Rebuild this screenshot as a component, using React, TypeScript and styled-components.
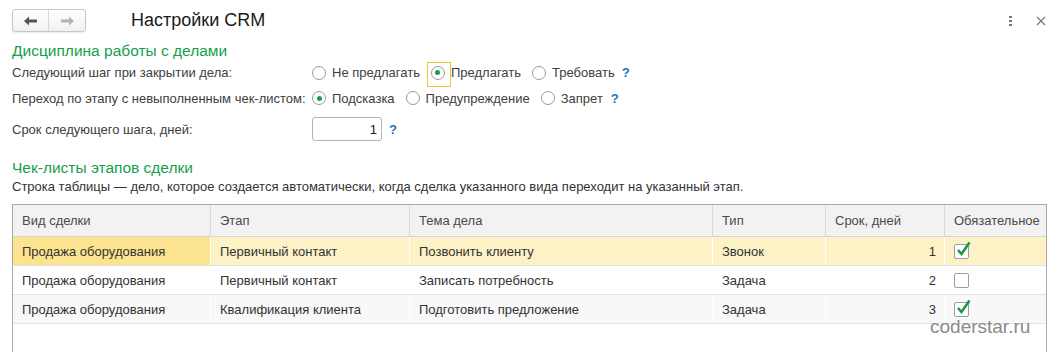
import React from "react";
import styled, { createGlobalStyle, css } from "styled-components";

const Global = createGlobalStyle`
  html, body { margin: 0; padding: 0; background: #fff; }
  body { font-family: "Liberation Sans", Arial, sans-serif; color: #404040; }
  * { box-sizing: border-box; }
`;

const Page = styled.div`
  position: relative;
  width: 1064px;
  height: 352px;
  overflow: hidden;
  background: #fff;
`;

const TopBar = styled.div`
  height: 41px;
  display: flex;
  align-items: center;
  padding: 0 12px;
`;

const NavGroup = styled.div`
  display: flex;
  height: 23px;
  border: 1px solid #c6c6c6;
  border-radius: 3px;
  background: linear-gradient(#ffffff, #f1f1f1);
  box-shadow: 0 1px 1px rgba(0,0,0,0.08);
`;

const NavButton = styled.div<{ $first?: boolean }>`
  width: 36px;
  display: flex;
  align-items: center;
  justify-content: center;
  ${(p) => p.$first && css`border-right: 1px solid #d6d6d6;`}
`;

const Title = styled.div`
  margin-left: 45px;
  font-size: 18px;
  color: #1a1a1a;
  flex: 1;
`;

const TopIcons = styled.div`
  display: flex;
  align-items: center;
  gap: 24px;
  margin-right: 6px;
`;

const Dots = styled.div`
  display: flex;
  flex-direction: column;
  gap: 2px;
  span { width: 3px; height: 2px; background: #777; display: block; }
`;

const Content = styled.div`
  padding: 0 12px;
`;

const SectionTitle = styled.div<{ $h: number; $mt?: number }>`
  height: ${(p) => p.$h}px;
  line-height: ${(p) => p.$h}px;
  margin-top: ${(p) => p.$mt ?? 0}px;
  font-size: 15.5px;
  color: #16a04a;
`;

const FormRow = styled.div<{ $h: number; $mt?: number }>`
  display: flex;
  align-items: center;
  height: ${(p) => p.$h}px;
  margin-top: ${(p) => p.$mt ?? 0}px;
  font-size: 13px;
`;

const Label = styled.div`
  width: 300px;
  white-space: nowrap;
`;

const RadioGroup = styled.div`
  display: flex;
  align-items: center;
`;

const RadioItem = styled.div`
  display: flex;
  align-items: center;
  margin-right: 11px;
`;

const RadioCircle = styled.div<{ $on?: boolean; $focus?: boolean }>`
  width: 14px;
  height: 14px;
  border-radius: 50%;
  border: 1px solid #9a9a9a;
  background: #fff;
  display: flex;
  align-items: center;
  justify-content: center;
  margin-right: 6px;
  position: relative;
  &::after {
    content: "";
    display: ${(p) => (p.$on ? "block" : "none")};
    width: 5px;
    height: 5px;
    border-radius: 50%;
    background: #16a04a;
  }
  ${(p) =>
    p.$focus &&
    css`
      &::before {
        content: "";
        position: absolute;
        left: -5px;
        top: -5px;
        width: 22px;
        height: 23px;
        border: 1px solid #f0c330;
        border-radius: 0;
      }
    `}
`;

const Help = styled.span<{ $ml?: number }>`
  color: #1c74c4;
  font-weight: bold;
  font-size: 13px;
  margin-left: ${(p) => p.$ml ?? 0}px;
`;

const NumberInput = styled.div`
  width: 70px;
  height: 24px;
  border: 1px solid #b4b4b4;
  border-radius: 3px;
  display: flex;
  align-items: center;
  justify-content: flex-end;
  padding-right: 4px;
  margin-right: 7px;
  color: #222;
`;

const Description = styled.div`
  height: 18px;
  line-height: 18px;
  font-size: 13px;
  color: #333;
`;

const Table = styled.div`
  margin-top: 8px;
  width: 1035px;
  height: 160px;
  border: 1px solid #a9a9a9;
  border-bottom: none;
`;

const cols = "198px 199px 303px 113px 119px 101px";

const HeaderRow = styled.div`
  display: grid;
  grid-template-columns: ${cols};
  height: 32px;
  background: #f2f2f2;
  border-bottom: 1px solid #d4d4d4;
`;

const HeaderCell = styled.div<{ $last?: boolean }>`
  display: flex;
  align-items: center;
  padding-left: 9px;
  font-size: 13px;
  color: #4a4a4a;
  border-right: ${(p) => (p.$last ? "none" : "1px solid #d9d9d9")};
`;

const BodyRow = styled.div<{ $bg: string }>`
  display: grid;
  grid-template-columns: ${cols};
  height: 29px;
  background: ${(p) => p.$bg};
  border-bottom: 1px solid #e2e2e2;
`;

const Cell = styled.div<{ $right?: boolean; $bg?: string; $last?: boolean }>`
  display: flex;
  align-items: center;
  justify-content: ${(p) => (p.$right ? "flex-end" : "flex-start")};
  padding: ${(p) => (p.$right ? "0 8px 0 0" : "0 0 0 9px")};
  font-size: 13px;
  color: #333;
  background: ${(p) => p.$bg ?? "transparent"};
  border-right: ${(p) => (p.$last ? "none" : "1px solid rgba(255,255,255,0.9)")};
  white-space: nowrap;
`;

const CheckBox = styled.div`
  width: 15px;
  height: 15px;
  border: 1px solid #9d9d9d;
  border-radius: 2px;
  background: #fff;
  position: relative;
  svg { position: absolute; left: 1px; top: -4px; }
`;

const Watermark = styled.div`
  position: absolute;
  left: 930px;
  top: 316px;
  font-size: 19px;
  color: #8a8a8a;
  font-family: "Liberation Sans", Arial, sans-serif;
`;

const ArrowLeft = ({ color }: { color: string }) => (
  <svg width="14" height="10" viewBox="0 0 14 10">
    <path d="M0 5 L5 0.5 L5 3.5 L13 3.5 L13 6.5 L5 6.5 L5 9.5 Z" fill={color} />
  </svg>
);
const ArrowRight = ({ color }: { color: string }) => (
  <svg width="14" height="10" viewBox="0 0 14 10">
    <path d="M14 5 L9 0.5 L9 3.5 L1 3.5 L1 6.5 L9 6.5 L9 9.5 Z" fill={color} />
  </svg>
);

const Check = () => (
  <svg width="15" height="16" viewBox="0 0 15 16">
    <path d="M2 9 L5.5 13 L13.5 1.5" stroke="#179a44" strokeWidth="2.6" fill="none" strokeLinejoin="miter" />
  </svg>
);

type Row = { kind: string; stage: string; topic: string; type: string; days: number; req: boolean };
const rows: Row[] = [
  { kind: "Продажа оборудования", stage: "Первичный контакт", topic: "Позвонить клиенту", type: "Звонок", days: 1, req: true },
  { kind: "Продажа оборудования", stage: "Первичный контакт", topic: "Записать потребность", type: "Задача", days: 2, req: false },
  { kind: "Продажа оборудования", stage: "Квалификация клиента", topic: "Подготовить предложение", type: "Задача", days: 3, req: true },
];
const rowBg = ["#fdf1c6", "#ffffff", "#f8f8f8"];

function Radio({ label, on, focus }: { label: string; on?: boolean; focus?: boolean }) {
  return (
    <RadioItem>
      <RadioCircle $on={on} $focus={focus} />
      {label}
    </RadioItem>
  );
}

export default function App() {
  return (
    <Page>
      <Global />
      <TopBar>
        <NavGroup>
          <NavButton $first>
            <ArrowLeft color="#555" />
          </NavButton>
          <NavButton>
            <ArrowRight color="#b3b3b3" />
          </NavButton>
        </NavGroup>
        <Title>Настройки CRM</Title>
        <TopIcons>
          <Dots>
            <span />
            <span />
            <span />
          </Dots>
          <svg width="10" height="10" viewBox="0 0 10 10">
            <path d="M1 1 L9 9 M9 1 L1 9" stroke="#777" strokeWidth="1.2" />
          </svg>
        </TopIcons>
      </TopBar>
      <Content>
        <SectionTitle $h={19}>Дисциплина работы с делами</SectionTitle>
        <FormRow $h={25}>
          <Label>Следующий шаг при закрытии дела:</Label>
          <RadioGroup>
            <Radio label="Не предлагать" />
            <Radio label="Предлагать" on focus />
            <Radio label="Требовать" />
            <Help $ml={-4}>?</Help>
          </RadioGroup>
        </FormRow>
        <FormRow $h={26}>
          <Label>Переход по этапу с невыполненным чек-листом:</Label>
          <RadioGroup>
            <Radio label="Подсказка" on />
            <Radio label="Предупреждение" />
            <Radio label="Запрет" />
            <Help $ml={-3}>?</Help>
          </RadioGroup>
        </FormRow>
        <FormRow $h={24} $mt={6}>
          <Label>Срок следующего шага, дней:</Label>
          <NumberInput>1</NumberInput>
          <Help>?</Help>
        </FormRow>
        <SectionTitle $h={20} $mt={17}>Чек-листы этапов сделки</SectionTitle>
        <Description>
          Строка таблицы — дело, которое создается автоматически, когда сделка указанного вида переходит на указанный этап.
        </Description>
        <Table>
          <HeaderRow>
            <HeaderCell>Вид сделки</HeaderCell>
            <HeaderCell>Этап</HeaderCell>
            <HeaderCell>Тема дела</HeaderCell>
            <HeaderCell>Тип</HeaderCell>
            <HeaderCell>Срок, дней</HeaderCell>
            <HeaderCell $last>Обязательное</HeaderCell>
          </HeaderRow>
          {rows.map((r, i) => (
            <BodyRow key={i} $bg={rowBg[i]}>
              <Cell $bg={i === 0 ? "#fce38f" : undefined}>{r.kind}</Cell>
              <Cell>{r.stage}</Cell>
              <Cell>{r.topic}</Cell>
              <Cell>{r.type}</Cell>
              <Cell $right>{r.days}</Cell>
              <Cell $last>
                <CheckBox>{r.req && <Check />}</CheckBox>
              </Cell>
            </BodyRow>
          ))}
        </Table>
      </Content>
      <Watermark>coderstar.ru</Watermark>
    </Page>
  );
}
